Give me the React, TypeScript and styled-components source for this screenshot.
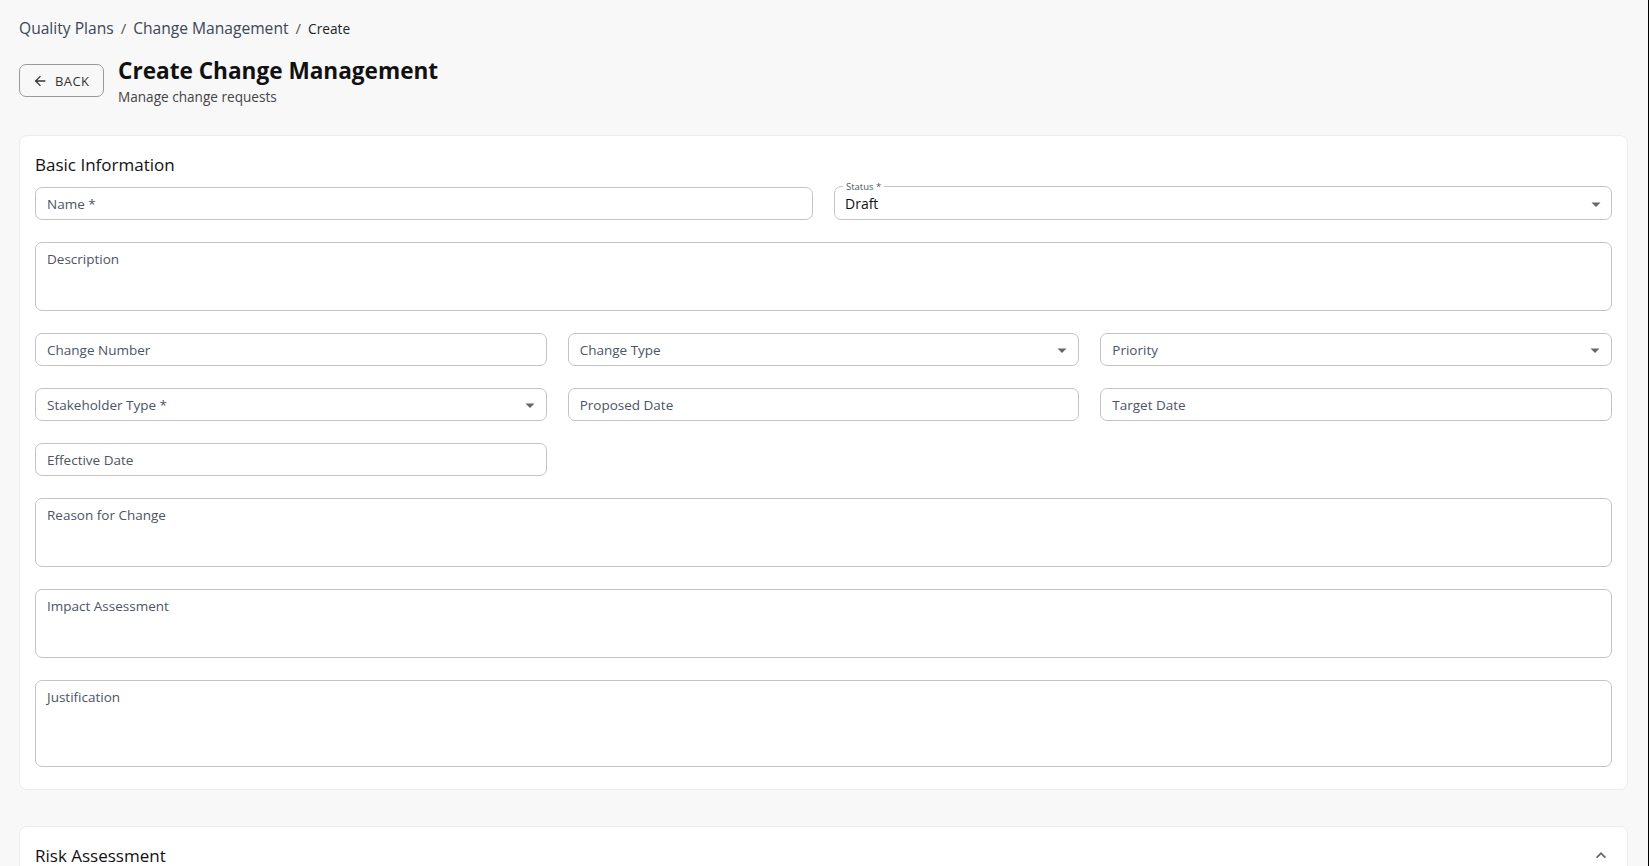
import * as React from "react";
import styled, { createGlobalStyle } from "styled-components";

const GlobalStyles = createGlobalStyle`
  html, body {
    margin: 0;
    padding: 0;
    background: #f8f8f8;
    font-family: "Open Sans", "Noto Sans", sans-serif;
    color: #1f2329;
    overflow: hidden;
  }
  body {
    border-right: 1px solid #000;
    min-height: 866px;
    box-sizing: border-box;
  }
`;

const Page = styled.main`
  padding: 17px 20px 0 19px;
`;

const Crumbs = styled.nav`
  display: flex;
  align-items: center;
  gap: 7px;
  height: 22px;
  color: #3b4656;
`;

const Crumb = styled.span<{ $current?: boolean }>`
  color: ${(p) => (p.$current ? "#1c1f24" : "#3b4656")};
  font-size: ${(p) => (p.$current ? "13.7px" : "15.6px")};
`;

const Sep = styled.span`
  color: #555;
  font-size: 15px;
`;

const Header = styled.header`
  display: flex;
  align-items: flex-start;
  gap: 14px;
  margin-top: 16px;
`;

const BackButton = styled.button`
  display: flex;
  align-items: center;
  gap: 7px;
  height: 33px;
  width: 85px;
  margin-top: 9px;
  padding: 0 0 0 12px;
  border: 1px solid #9a9a9a;
  border-radius: 7px;
  background: transparent;
  font-family: inherit;
  font-size: 13px;
  font-weight: 500;
  letter-spacing: 0.4px;
  color: #333;
  cursor: pointer;
`;

const TitleBlock = styled.div`
  display: flex;
  flex-direction: column;
  padding-top: 1px;
`;

const Title = styled.h1`
  margin: 0;
  font-size: 22.6px;
  font-weight: 700;
  line-height: 30px;
  color: #111;
`;

const Subtitle = styled.p`
  margin: 0;
  font-size: 13.6px;
  line-height: 21px;
  color: #444;
`;

const Card = styled.section<{ $gapTop: number }>`
  margin-top: ${(p) => p.$gapTop}px;
  background: #fff;
  border: 1px solid #ececec;
  border-radius: 8px;
  padding: 14px 15px 22px;
`;

const CardHead = styled.div`
  display: flex;
  align-items: center;
  justify-content: space-between;
  height: 28px;
  margin-bottom: 9px;
`;

const CardTitle = styled.h2`
  margin: 0;
  font-size: 17px;
  font-weight: 400;
  color: #111;
`;

const Grid = styled.div<{ $cols: number }>`
  display: grid;
  grid-template-columns: repeat(${(p) => p.$cols}, 1fr);
  column-gap: 21px;
  margin-bottom: 22px;
  &:last-child {
    margin-bottom: 0;
  }
`;

const Box = styled.div<{ $h: number; $multi?: boolean }>`
  position: relative;
  height: ${(p) => p.$h}px;
  box-sizing: border-box;
  border: 1px solid #c4c4c4;
  border-radius: 7px;
  background: #fff;
  display: flex;
  align-items: ${(p) => (p.$multi ? "flex-start" : "center")};
  padding: ${(p) => (p.$multi ? "6px 11px 0" : "0 11px")};
`;

const Label = styled.span`
  font-size: 13.5px;
  color: #4b5565;
`;

const Value = styled.span`
  font-size: 14px;
  color: #111;
`;

const Notch = styled.fieldset`
  position: absolute;
  inset: -6px 0 0 0;
  margin: 0;
  padding: 0 8px;
  border: 1px solid #c4c4c4;
  border-radius: 7px;
  pointer-events: none;
`;

const NotchLegend = styled.legend`
  padding: 0 3px;
  font-size: 9.5px;
  line-height: 11px;
  color: #4b5565;
`;

const Caret = styled.svg`
  position: absolute;
  right: 4px;
  top: 50%;
  margin-top: -12px;
  width: 24px;
  height: 24px;
  fill: #666;
`;

const Chevron = styled.svg`
  width: 24px;
  height: 24px;
  fill: #666;
  margin-right: -1px;
`;

const DropCaret = () => (
  <Caret viewBox="0 0 24 24">
    <path d="M7.5 10.5l4.5 4.5 4.5-4.5z" />
  </Caret>
);

type FieldProps = { label: string; select?: boolean; rows?: number };

const Field: React.FC<FieldProps> = ({ label, select, rows }) => {
  const h = rows ? (rows === 4 ? 87 : 69) : 33;
  return (
    <Box $h={h} $multi={!!rows}>
      <Label style={rows ? { marginTop: 1 } : undefined}>{label}</Label>
      {select && <DropCaret />}
    </Box>
  );
};

const StatusField = () => (
  <Box $h={33} style={{ border: "none" }}>
    <Notch>
      <NotchLegend>Status *</NotchLegend>
    </Notch>
    <Value>Draft</Value>
    <DropCaret />
  </Box>
);

export default function App() {
  return (
    <>
      <GlobalStyles />
      <Page>
        <Crumbs>
          <Crumb>Quality Plans</Crumb>
          <Sep>/</Sep>
          <Crumb>Change Management</Crumb>
          <Sep>/</Sep>
          <Crumb $current>Create</Crumb>
        </Crumbs>
        <Header>
          <BackButton>
            <svg width="16" height="16" viewBox="0 0 24 24" fill="#333">
              <path d="M20 11H7.83l5.59-5.59L12 4l-8 8 8 8 1.41-1.41L7.83 13H20v-2z" />
            </svg>
            BACK
          </BackButton>
          <TitleBlock>
            <Title>Create Change Management</Title>
            <Subtitle>Manage change requests</Subtitle>
          </TitleBlock>
        </Header>

        <Card $gapTop={28}>
          <CardHead>
            <CardTitle>Basic Information</CardTitle>
          </CardHead>
          <Grid $cols={2}>
            <Field label="Name *" />
            <StatusField />
          </Grid>
          <Grid $cols={1}>
            <Field label="Description" rows={3} />
          </Grid>
          <Grid $cols={3}>
            <Field label="Change Number" />
            <Field label="Change Type" select />
            <Field label="Priority" select />
          </Grid>
          <Grid $cols={3}>
            <Field label="Stakeholder Type *" select />
            <Field label="Proposed Date" />
            <Field label="Target Date" />
          </Grid>
          <Grid $cols={3}>
            <Field label="Effective Date" />
          </Grid>
          <Grid $cols={1}>
            <Field label="Reason for Change" rows={3} />
          </Grid>
          <Grid $cols={1}>
            <Field label="Impact Assessment" rows={3} />
          </Grid>
          <Grid $cols={1}>
            <Field label="Justification" rows={4} />
          </Grid>
        </Card>

        <Card $gapTop={36}>
          <CardHead>
            <CardTitle>Risk Assessment</CardTitle>
            <Chevron viewBox="0 0 24 24">
              <path d="M12 9l-5 5 1.2 1.2L12 11.4l3.8 3.8L17 14z" />
            </Chevron>
          </CardHead>
        </Card>
      </Page>
    </>
  );
}
